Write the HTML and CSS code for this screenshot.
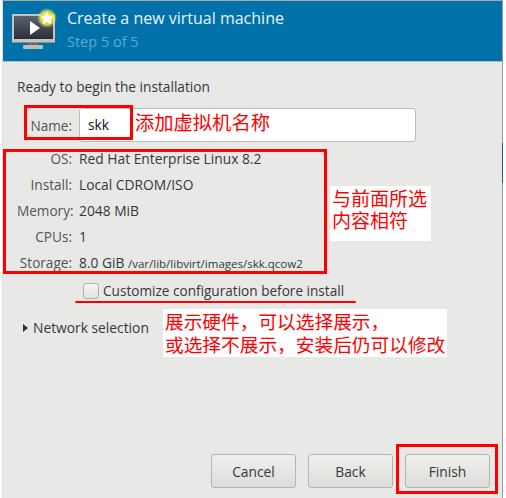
FILE: index.html
```html
<!DOCTYPE html>
<html lang="en">
<head>
<meta charset="utf-8">
<title>Create a new virtual machine</title>
<link rel="stylesheet" href="styles.css">
</head>
<body>
<div class="window">
  <header class="banner">
    <svg class="logo" width="46" height="44" viewBox="0 0 46 44">
      <defs>
        <linearGradient id="scr" x1="0" y1="0" x2="0" y2="1"><stop offset="0" stop-color="#5a6472"/><stop offset="1" stop-color="#2b2f38"/></linearGradient>
        <radialGradient id="glow"><stop offset="0" stop-color="#fff58a"/><stop offset=".65" stop-color="#e8e64a" stop-opacity=".9"/><stop offset="1" stop-color="#e8e64a" stop-opacity="0"/></radialGradient>
      </defs>
      <rect x="1" y="6" width="43" height="29" rx="1" fill="#c4c4c0"/>
      <rect x="3" y="8" width="39" height="23" fill="url(#scr)"/>
      <rect x="1" y="34" width="43" height="1" fill="#8e8e8a"/>
      <rect x="17" y="35" width="10" height="2" fill="#6a6a68"/>
      <rect x="12" y="37" width="20" height="4" rx="1" fill="#bdbdb9"/>
      <path d="M19 13 L29 20 L19 27 Z" fill="#fff"/>
      <circle cx="36" cy="10" r="10" fill="url(#glow)"/>
      <path d="M36 3.500 L38 8 L42.500 8.500 L39.200 11.500 L40.200 16 L36 13.700 L31.800 16 L32.800 11.500 L29.500 8.500 L34 8 Z" fill="#fff"/>
    </svg>
    <div class="titles">
      <div class="title">Create a new virtual machine</div>
      <div class="step">Step 5 of 5</div>
    </div>
  </header>
  <main class="content">
    <p class="ready">Ready to begin the installation</p>
    <div class="name-row">
      <label class="key">Name:</label>
      <div class="entry">skk</div>
    </div>
    <dl class="summary">
      <dt class="key">OS:</dt><dd>Red Hat Enterprise Linux 8.2</dd>
      <dt class="key">Install:</dt><dd>Local CDROM/ISO</dd>
      <dt class="key">Memory:</dt><dd>2048 MiB</dd>
      <dt class="key">CPUs:</dt><dd>1</dd>
      <dt class="key">Storage:</dt><dd>8.0 GiB <small>/var/lib/libvirt/images/skk.qcow2</small></dd>
    </dl>
    <div class="check-row"><span class="check"></span><span>Customize configuration before install</span></div>
    <div class="expander"><span class="arrow"></span><span>Network selection</span></div>
    <div class="actions">
      <button class="btn">Cancel</button>
      <button class="btn">Back</button>
      <button class="btn">Finish</button>
    </div>
  </main>
</div>
<div class="edge"></div>
<div class="mark mark-name"></div>
<div class="mark mark-info"></div>
<div class="mark mark-line"></div>
<div class="mark mark-finish"></div>
<div class="note note-name" lang="zh">添加虚拟机名称</div>
<div class="note note-same" lang="zh">与前面所选<br>内容相符</div>
<div class="note note-hw" lang="zh">展示硬件，可以选择展示，<br>或选择不展示，安装后仍可以修改</div>
</body>
</html>
```
FILE: styles.css
```css
* { box-sizing: border-box; }
html, body { margin: 0; padding: 0; background: #fff; }
body { width: 506px; height: 498px; overflow: hidden; position: relative; font-family: "Open Sans", "Noto Sans", sans-serif; font-size: 13.800px; color: #2e3436; }
.window { margin-left: 2px; width: 501px; height: 498px; background: #e8e8e6; border-top: 1px solid #a8a8a4; border-left: 1px solid #dcdcd9; border-right: 1px solid #9c9c98; display: flex; flex-direction: column; }
.edge { position: absolute; left: 502px; top: 143px; width: 1px; height: 40px; background: #1f5f9a; }
.banner { height: 61px; background: #0072a9; border-bottom: 1px solid #b5c0c6; display: flex; padding: 6px 0 0 8px; gap: 10px; flex: none; }
.logo { margin-top: 1px; flex: none; }
.title { color: #eaf4f8; font-size: 16px; line-height: 22px; }
.step { color: #5ea9d3; font-size: 14.500px; line-height: 20px; margin-top: 3px; }
.content { flex: 1; position: relative; padding: 0 0 0 14px; }
.ready { margin: 15px 0 0; font-size: 13.700px; line-height: 20px; color: #33393b; }
.key { color: #4f5557; text-align: right; font-size: 13.600px; }
.name-row { display: grid; grid-template-columns: 55px 337px; gap: 7px; align-items: center; margin-top: 11px; height: 34px; }
.entry { height: 34px; background: #fff; border: 1px solid #bdbdb8; border-radius: 3px; padding-left: 8px; line-height: 32px; color: #111; }
.summary { display: grid; grid-template-columns: 55px 1fr; column-gap: 7px; grid-auto-rows: 25.800px; margin: 4px 0 0; align-items: center; }
.summary dd { margin: 0; color: #33393b; white-space: nowrap; }
.summary small { font-size: 11.500px; }
.check-row { display: flex; align-items: center; gap: 4px; margin: 7px 0 0 66px; height: 18px; font-size: 13.600px; color: #33393b; }
.check { width: 16px; height: 16px; border: 1px solid #b0b0ac; border-radius: 3px; background: linear-gradient(#f4f4f2, #e2e2df); }
.expander { display: flex; align-items: center; gap: 5px; margin: 19px 0 0 6px; height: 18px; color: #33393b; }
.arrow { width: 0; height: 0; border-left: 5px solid #2e3436; border-top: 4.500px solid transparent; border-bottom: 4.500px solid transparent; }
.actions { position: absolute; top: 392px; left: 208px; display: flex; gap: 12px; }
.btn { width: 85px; height: 34px; border: 1px solid #b4b4b0; border-radius: 3px; background: linear-gradient(#efefed, #dcdcd9); font: inherit; color: #33393b; padding: 0; }
.mark { position: absolute; }
.mark-name { left: 24px; top: 105px; width: 109px; height: 35px; border: 3px solid #f00; }
.mark-info { left: 3px; top: 149px; width: 324px; height: 125px; border: 3px solid #f00; }
.mark-line { left: 75px; top: 301px; width: 281px; height: 2px; background: #f00; border-radius: 1px; }
.mark-finish { left: 396px; top: 444px; width: 102px; height: 50px; border: 3px solid #f00; }
.note { position: absolute; color: #f00; font-family: "Noto Sans CJK SC", sans-serif; white-space: nowrap; }
.note-name { left: 135px; top: 109px; font-size: 19.300px; line-height: 26px; }
.note-same { left: 330px; top: 186px; width: 101px; height: 55px; padding: 1px 0 0 2px; background: #fff; font-size: 19px; line-height: 22px; }
.note-hw { left: 163px; top: 309px; width: 284px; height: 48px; padding-left: 2px; background: #fff; font-size: 18.700px; line-height: 23px; }
```
